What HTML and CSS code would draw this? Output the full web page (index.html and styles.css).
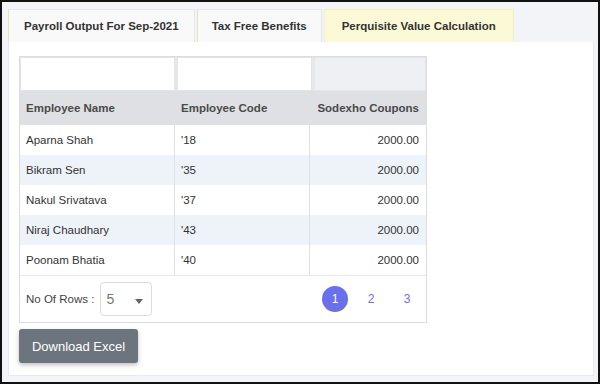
FILE: index.html
```html
<!DOCTYPE html>
<html lang="en">
<head>
<meta charset="UTF-8">
<title>Payroll Output</title>
<link rel="stylesheet" href="styles.css">
</head>
<body>
<div class="frame">
  <div class="tabs">
    <div class="tab">Payroll Output For Sep-2021</div>
    <div class="tab">Tax Free Benefits</div>
    <div class="tab hl">Perquisite Value Calculation</div>
  </div>

  <div class="panel">
    <div class="grid">
      <div class="row filter">
        <div class="c"></div><div class="c"></div><div class="c fill"></div>
      </div>
      <div class="row head">
        <div class="c">Employee Name</div><div class="c">Employee Code</div><div class="c num">Sodexho Coupons</div>
      </div>
      <div class="row"><div class="c">Aparna Shah</div><div class="c">'18</div><div class="c num">2000.00</div></div>
      <div class="row alt"><div class="c">Bikram Sen</div><div class="c">'35</div><div class="c num">2000.00</div></div>
      <div class="row"><div class="c">Nakul Srivatava</div><div class="c">'37</div><div class="c num">2000.00</div></div>
      <div class="row alt"><div class="c">Niraj Chaudhary</div><div class="c">'43</div><div class="c num">2000.00</div></div>
      <div class="row"><div class="c">Poonam Bhatia</div><div class="c">'40</div><div class="c num">2000.00</div></div>

      <div class="foot">
        <div class="rows">
          <span>No Of Rows :</span>
          <div class="sel">5<i></i></div>
        </div>
        <div class="pager">
          <span class="on">1</span><span>2</span><span>3</span>
        </div>
      </div>
    </div>

    <button class="dl">Download Excel</button>
  </div>
</div>
</body>
</html>
```

FILE: styles.css
```css
*{margin:0;padding:0;box-sizing:border-box}
body{font-family:"Liberation Sans",Arial,sans-serif;color:#333;background:#fff}
.frame{width:600px;height:384px;border:2px solid #111;background:#f3f4f8;padding:7px 4px 6px 6px;display:flex;flex-direction:column}

/* tabs */
.tabs{display:flex;gap:2px;height:33px}
.tab{padding:0 15px;display:flex;align-items:center;font-size:11.5px;font-weight:bold;color:#333;background:#f9f9fa;border:1px solid #e6e6e8;border-left-color:#e6e3b4;border-bottom:none}
.tab:nth-child(2){padding:0 14px}
.tab.hl{padding:0 17px;background:#fcfad6;border-color:#f3f0c6}

/* panel */
.panel{flex:1;background:#fff;border:1px solid #e8e9ee;border-top:none;padding:14px 10px 11px 10px}
.grid{width:408px;border:1px solid #dcdde0;font-size:11.5px}
.row{display:grid;grid-template-columns:155px 135px 1fr;height:30px}
.row .c{display:flex;align-items:center;padding:0 6px;border-right:1px solid #dfe0e3}
.row .c:last-child{border-right:none}
.row .num{justify-content:flex-end;padding-right:7px}
.row.alt{background:#eef2f9}
.row.filter{height:34px;background:#e6e8ec;gap:2px}
.row.filter .c{background:#fff;border:1px solid #e2e3e6}
.row.filter .c.fill{background:#eef0f4;border-color:#e4e6ea}
.row.head{height:34px;background:#dfe0e3;font-weight:bold;color:#4a4a4a}
.row.head .c{border-right:none}

.foot{display:flex;justify-content:space-between;align-items:center;height:47px;padding:0 6px;border-top:1px solid #e6e7ea}
.rows{display:flex;align-items:center;gap:6px;color:#444}
.sel{position:relative;width:52px;height:34px;border:1px solid #dcdcdc;border-radius:4px;display:flex;align-items:center;padding-left:5px;font-size:14px;color:#777}
.sel i{position:absolute;right:8px;top:16px;border:4px solid transparent;border-top:5px solid #666;border-bottom:none}
.pager{display:flex;align-items:center;gap:10px}
.pager span{width:26px;height:26px;border-radius:50%;display:flex;align-items:center;justify-content:center;color:#6a70ec;font-size:12px}
.pager span.on{background:#6a70ec;color:#fff}

.dl{margin-top:6px;width:119px;height:34px;border:none;border-radius:3px;background:#6c757d;color:#fff;font-family:"Liberation Sans",Arial,sans-serif;font-size:13px;box-shadow:0 2px 4px rgba(0,0,0,.25)}
```
